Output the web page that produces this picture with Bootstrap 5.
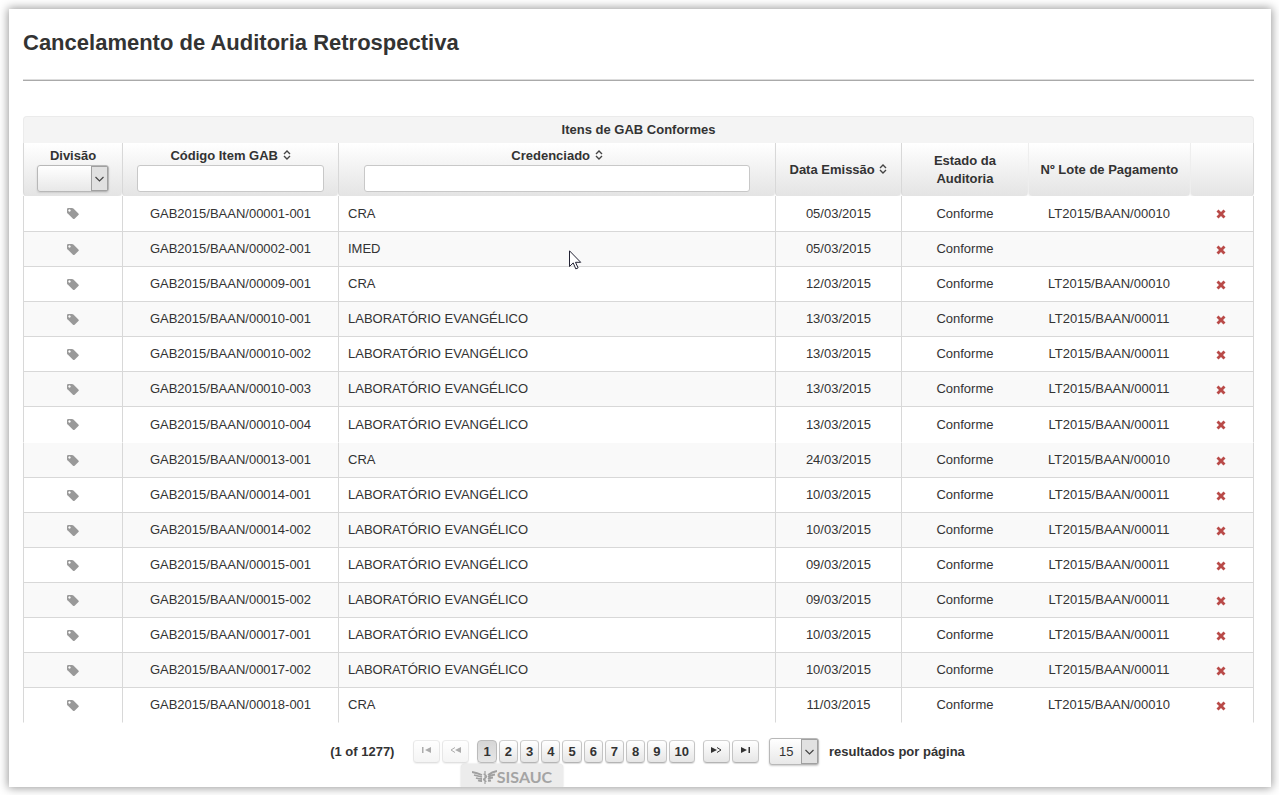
<!DOCTYPE html>
<html lang="pt-BR">
<head>
<meta charset="utf-8">
<meta name="viewport" content="width=device-width, initial-scale=1">
<title>Cancelamento de Auditoria Retrospectiva</title>
<link href="https://cdn.jsdelivr.net/npm/bootstrap@5.3.0/dist/css/bootstrap.min.css" rel="stylesheet">
<style>
body{font-family:"Liberation Sans",Arial,sans-serif;font-size:13px;line-height:18px;color:#333;background:#fff;padding:9px 8px 8px 9px}
.page-box{background:#fff;box-shadow:0 0 9px 1px #999;padding:19px 17px 22px 14px}
.page-title{font-size:22px;line-height:30px;font-weight:700;margin:0}
.title-rule{border-top:1px solid #ddd;border-bottom:1px solid #aaa;margin:21px 0 35px}
.gab-grid{table-layout:fixed;border-collapse:separate;border-spacing:0;color:#333}
.gab-grid>thead>tr>th,.gab-grid>tbody>tr>td{padding:0 9px;border:0;border-left:1px solid #d8d8d8;box-shadow:none;vertical-align:middle}
.gab-grid>thead>tr.grid-title>th{height:27px;background:#f4f4f4;border:1px solid #ebebeb;border-bottom:0;border-radius:4px 4px 0 0}
.gab-grid>thead>tr.grid-cols>th{height:53px;padding:0 8px;background:linear-gradient(#fff,#e4e4e4);border-radius:0 0 4px 4px;box-shadow:0 1px 1px #eee}
.gab-grid>tbody>tr>td{height:35px;border-bottom:1px solid #d8d8d8;background:#fff;white-space:nowrap}
.gab-grid>tbody>tr:first-child>td,.gab-grid>tbody>tr.unruled>td{height:36px}
.gab-grid>tbody>tr:nth-child(even)>td{background:#f9f9f9}
.gab-grid>tbody>tr.unruled>td,.gab-grid>tbody>tr:last-child>td{border-bottom-color:transparent}
.gab-grid>tbody>tr>td:nth-child(n+6){border-left:0}
.gab-grid>thead>tr.grid-cols>th:nth-child(n+6){border-left-color:#eee}
.gab-grid>thead>tr.grid-cols>th:last-child,.gab-grid>tbody>tr>td:last-child{border-right:1px solid #d8d8d8}
.w-div{width:99px}.w-cod{width:216px}.w-data{width:126px}.w-est{width:127px}.w-lote{width:162px}.w-del{width:64px}
.filter-box{height:27px;border:1px solid #c8c8c8;border-radius:3px;padding:0 6px;background:#fff;width:187px;display:block;margin:0 auto}
.filter-wide{width:386px}
.pick{appearance:none;height:27px;border:1px solid #b8b8b8;border-radius:3px;padding:0 18px 0 9px;color:#333;box-shadow:0 1px 2px #ccc;
background:url("data:image/svg+xml,%3Csvg xmlns='http://www.w3.org/2000/svg' width='17' height='25'%3E%3Cpath fill='%23e1e1e1' d='M0 0h17v25H0z'/%3E%3Cpath fill='none' stroke='%23a0a0a0' d='M.5 0v25M0 .5h17M16.500 0v25M0 24.500h17'/%3E%3Cpath fill='none' stroke='%23444' stroke-width='1.200' d='M4.500 11l4 4 4-4'/%3E%3C/svg%3E") right center no-repeat,linear-gradient(#fff,#e8e8e8)}
.pick-div{width:72px;display:block;margin:0 auto}
.pick-rows{width:50px;margin:0 10px;background-color:#f4f4f4}
.bare{border:0;background:none;padding:0;color:inherit;font-weight:inherit}
.row-btn{line-height:0}
.sort-ico{width:8px;height:10px;margin-left:1px;vertical-align:baseline}
.pointer{left:230px;top:18px;width:13px;height:20px}
.pager{padding:15px 0 0 18px}
.page-count{margin-right:19px}
.nav-gap{gap:2px}
.pg{height:23px;padding:0 5px;border:1px solid #c4c4c4;border-color:#d2d2d2 #c4c4c4 #b4b4b4;border-radius:4px;background:linear-gradient(#fff,#e6e6e6);font-weight:700;line-height:20px;color:#333;box-shadow:0 1px 1px #ddd}
.pg.on{background:linear-gradient(#d6d6d6,#e6e6e6);border-color:#bbb}
.pg-nav{width:27px;padding:0;line-height:0}
.pg-nav svg{width:11px;height:8px;margin-bottom:4px;fill:#333}
.pg:disabled{opacity:.4}
.brand-tab{left:452px;bottom:0;width:102px;height:23px;padding-top:3px;background:#ececec;border-radius:4px 4px 0 0;box-shadow:0 0 2px #ccc;color:#a4a4a4;font:700 16px/20px Lato,sans-serif}
.brand-tab svg{width:25px;height:14px}
</style>
</head>
<body>
<svg width="0" height="0" class="position-absolute" aria-hidden="true">
<symbol id="tag" viewBox="0 0 12 12"><path fill="#999" fill-rule="evenodd" d="M0 1.200Q0 0 1.200 0H5q.8 0 1.400.6l5 4.800q.8.8 0 1.600l-3.800 3.700q-.8.8-1.600 0l-5-5Q0 5.200 0 4.500zM2.500 1.300a1.200 1.200 0 1 0 .01 0z"/></symbol>
<symbol id="del" viewBox="0 0 10 10"><path fill="#b94a48" d="M2.500.5 5 3 7.500.5l2 2L7 5l2.500 2.500-2 2L5 7 2.500 9.500l-2-2L3 5 .5 2.500z"/></symbol>
<symbol id="sort" viewBox="0 0 8 10"><path fill="none" stroke="#444" stroke-width="1.400" d="M1 4l3-3 3 3M1 6l3 3 3-3"/></symbol>
</svg>
<main class="page-box position-relative">
<h1 class="page-title">Cancelamento de Auditoria Retrospectiva</h1>
<div class="title-rule"></div>
<table class="table gab-grid text-center mb-0">
<colgroup><col class="w-div"><col class="w-cod"><col><col class="w-data"><col class="w-est"><col class="w-lote"><col class="w-del"></colgroup>
<thead>
<tr class="grid-title"><th colspan="7">Itens de GAB Conformes</th></tr>
<tr class="grid-cols">
<th><label for="f-div">Divisão</label><select id="f-div" class="pick pick-div"><option></option></select></th>
<th><label for="f-cod">Código Item GAB</label> <button class="bare" aria-label="Ordenar por código"><svg class="sort-ico"><use href="#sort"/></svg></button><input id="f-cod" type="text" class="filter-box"></th>
<th><label for="f-cred">Credenciado</label> <button class="bare" aria-label="Ordenar por credenciado"><svg class="sort-ico"><use href="#sort"/></svg></button><input id="f-cred" type="text" class="filter-box filter-wide"></th>
<th class="text-nowrap">Data Emissão <button class="bare" aria-label="Ordenar por data"><svg class="sort-ico"><use href="#sort"/></svg></button></th>
<th>Estado da<br>Auditoria</th>
<th class="text-nowrap">Nº Lote de Pagamento</th>
<th></th>
</tr>
</thead>
<tbody>
<tr><td><svg width="12" height="12"><use href="#tag"/></svg></td><td>GAB2015/BAAN/00001-001</td><td class="text-start">CRA</td><td>05/03/2015</td><td>Conforme</td><td>LT2015/BAAN/00010</td><td><button class="bare row-btn" aria-label="Cancelar"><svg width="10" height="10"><use href="#del"/></svg></button></td></tr>
<tr><td><svg width="12" height="12"><use href="#tag"/></svg></td><td>GAB2015/BAAN/00002-001</td><td class="text-start position-relative">IMED<svg class="pointer position-absolute" viewBox="0 0 13 20"><path fill="#fff" stroke="#223" d="M.5.8v15.700l3.700-3.600 2.600 6 2.300-1-2.600-5.600h5.200z"/></svg></td><td>05/03/2015</td><td>Conforme</td><td></td><td><button class="bare row-btn" aria-label="Cancelar"><svg width="10" height="10"><use href="#del"/></svg></button></td></tr>
<tr><td><svg width="12" height="12"><use href="#tag"/></svg></td><td>GAB2015/BAAN/00009-001</td><td class="text-start">CRA</td><td>12/03/2015</td><td>Conforme</td><td>LT2015/BAAN/00010</td><td><button class="bare row-btn" aria-label="Cancelar"><svg width="10" height="10"><use href="#del"/></svg></button></td></tr>
<tr><td><svg width="12" height="12"><use href="#tag"/></svg></td><td>GAB2015/BAAN/00010-001</td><td class="text-start">LABORATÓRIO EVANGÉLICO</td><td>13/03/2015</td><td>Conforme</td><td>LT2015/BAAN/00011</td><td><button class="bare row-btn" aria-label="Cancelar"><svg width="10" height="10"><use href="#del"/></svg></button></td></tr>
<tr><td><svg width="12" height="12"><use href="#tag"/></svg></td><td>GAB2015/BAAN/00010-002</td><td class="text-start">LABORATÓRIO EVANGÉLICO</td><td>13/03/2015</td><td>Conforme</td><td>LT2015/BAAN/00011</td><td><button class="bare row-btn" aria-label="Cancelar"><svg width="10" height="10"><use href="#del"/></svg></button></td></tr>
<tr><td><svg width="12" height="12"><use href="#tag"/></svg></td><td>GAB2015/BAAN/00010-003</td><td class="text-start">LABORATÓRIO EVANGÉLICO</td><td>13/03/2015</td><td>Conforme</td><td>LT2015/BAAN/00011</td><td><button class="bare row-btn" aria-label="Cancelar"><svg width="10" height="10"><use href="#del"/></svg></button></td></tr>
<tr class="unruled"><td><svg width="12" height="12"><use href="#tag"/></svg></td><td>GAB2015/BAAN/00010-004</td><td class="text-start">LABORATÓRIO EVANGÉLICO</td><td>13/03/2015</td><td>Conforme</td><td>LT2015/BAAN/00011</td><td><button class="bare row-btn" aria-label="Cancelar"><svg width="10" height="10"><use href="#del"/></svg></button></td></tr>
<tr><td><svg width="12" height="12"><use href="#tag"/></svg></td><td>GAB2015/BAAN/00013-001</td><td class="text-start">CRA</td><td>24/03/2015</td><td>Conforme</td><td>LT2015/BAAN/00010</td><td><button class="bare row-btn" aria-label="Cancelar"><svg width="10" height="10"><use href="#del"/></svg></button></td></tr>
<tr><td><svg width="12" height="12"><use href="#tag"/></svg></td><td>GAB2015/BAAN/00014-001</td><td class="text-start">LABORATÓRIO EVANGÉLICO</td><td>10/03/2015</td><td>Conforme</td><td>LT2015/BAAN/00011</td><td><button class="bare row-btn" aria-label="Cancelar"><svg width="10" height="10"><use href="#del"/></svg></button></td></tr>
<tr><td><svg width="12" height="12"><use href="#tag"/></svg></td><td>GAB2015/BAAN/00014-002</td><td class="text-start">LABORATÓRIO EVANGÉLICO</td><td>10/03/2015</td><td>Conforme</td><td>LT2015/BAAN/00011</td><td><button class="bare row-btn" aria-label="Cancelar"><svg width="10" height="10"><use href="#del"/></svg></button></td></tr>
<tr><td><svg width="12" height="12"><use href="#tag"/></svg></td><td>GAB2015/BAAN/00015-001</td><td class="text-start">LABORATÓRIO EVANGÉLICO</td><td>09/03/2015</td><td>Conforme</td><td>LT2015/BAAN/00011</td><td><button class="bare row-btn" aria-label="Cancelar"><svg width="10" height="10"><use href="#del"/></svg></button></td></tr>
<tr><td><svg width="12" height="12"><use href="#tag"/></svg></td><td>GAB2015/BAAN/00015-002</td><td class="text-start">LABORATÓRIO EVANGÉLICO</td><td>09/03/2015</td><td>Conforme</td><td>LT2015/BAAN/00011</td><td><button class="bare row-btn" aria-label="Cancelar"><svg width="10" height="10"><use href="#del"/></svg></button></td></tr>
<tr><td><svg width="12" height="12"><use href="#tag"/></svg></td><td>GAB2015/BAAN/00017-001</td><td class="text-start">LABORATÓRIO EVANGÉLICO</td><td>10/03/2015</td><td>Conforme</td><td>LT2015/BAAN/00011</td><td><button class="bare row-btn" aria-label="Cancelar"><svg width="10" height="10"><use href="#del"/></svg></button></td></tr>
<tr><td><svg width="12" height="12"><use href="#tag"/></svg></td><td>GAB2015/BAAN/00017-002</td><td class="text-start">LABORATÓRIO EVANGÉLICO</td><td>10/03/2015</td><td>Conforme</td><td>LT2015/BAAN/00011</td><td><button class="bare row-btn" aria-label="Cancelar"><svg width="10" height="10"><use href="#del"/></svg></button></td></tr>
<tr><td><svg width="12" height="12"><use href="#tag"/></svg></td><td>GAB2015/BAAN/00018-001</td><td class="text-start">CRA</td><td>11/03/2015</td><td>Conforme</td><td>LT2015/BAAN/00010</td><td><button class="bare row-btn" aria-label="Cancelar"><svg width="10" height="10"><use href="#del"/></svg></button></td></tr>
</tbody>
</table>
<nav class="pager d-flex justify-content-center align-items-center flex-wrap" aria-label="Paginação">
<span class="page-count fw-bold">(1 of 1277)</span>
<div class="d-flex gap-2 align-items-center">
<div class="d-flex nav-gap"><button class="pg pg-nav" disabled aria-label="Primeira"><svg viewBox="0 0 11 8"><path d="M1 1h1.500v6H1zM10 1v6L4 4z"/></svg></button><button class="pg pg-nav" disabled aria-label="Anterior"><svg viewBox="0 0 11 8"><path d="M11 1v6L5 4z"/><path fill="none" stroke="#333" d="M5 1.500 1 4l4 2.500"/></svg></button></div>
<div class="d-flex nav-gap"><button class="pg on" aria-current="page">1</button><button class="pg">2</button><button class="pg">3</button><button class="pg">4</button><button class="pg">5</button><button class="pg">6</button><button class="pg">7</button><button class="pg">8</button><button class="pg">9</button><button class="pg">10</button></div>
<div class="d-flex nav-gap"><button class="pg pg-nav" aria-label="Próxima"><svg viewBox="0 0 11 8"><path d="M0 1v6l6-3z"/><path fill="none" stroke="#333" d="M6 1.500 10 4 6 6.500"/></svg></button><button class="pg pg-nav" aria-label="Última"><svg viewBox="0 0 11 8"><path d="M1 1v6l6-3zM8.500 1H10v6H8.500z"/></svg></button></div>
</div>
<select id="per-page" class="pick pick-rows"><option>15</option></select>
<label for="per-page" class="fw-bold">resultados por página</label>
</nav>
<div class="brand-tab position-absolute d-flex justify-content-center align-items-center"><svg viewBox="0 0 25 14" fill="none" stroke="#a0a0a0" stroke-width="1.800"><path d="M0 2q5 1 10 3M2 5q4 1 8 2M4 8q3 1 6 1M6 10.500q2 .6 4 .5M25 1q-5 1-9 4M23 4.500q-4 .5-7 2.500M21 7.500q-3 .3-5 1.500M19 10.500q-2 .3-3 .4"/><path stroke-width="1.200" d="M13 1v13M11.500 4q3 1 3 2.500t-3 2.500q0 1.500 3 2.500"/></svg><span>SISAUC</span></div>
</main>
<script src="https://cdn.jsdelivr.net/npm/bootstrap@5.3.0/dist/js/bootstrap.bundle.min.js"></script>
</body>
</html>
